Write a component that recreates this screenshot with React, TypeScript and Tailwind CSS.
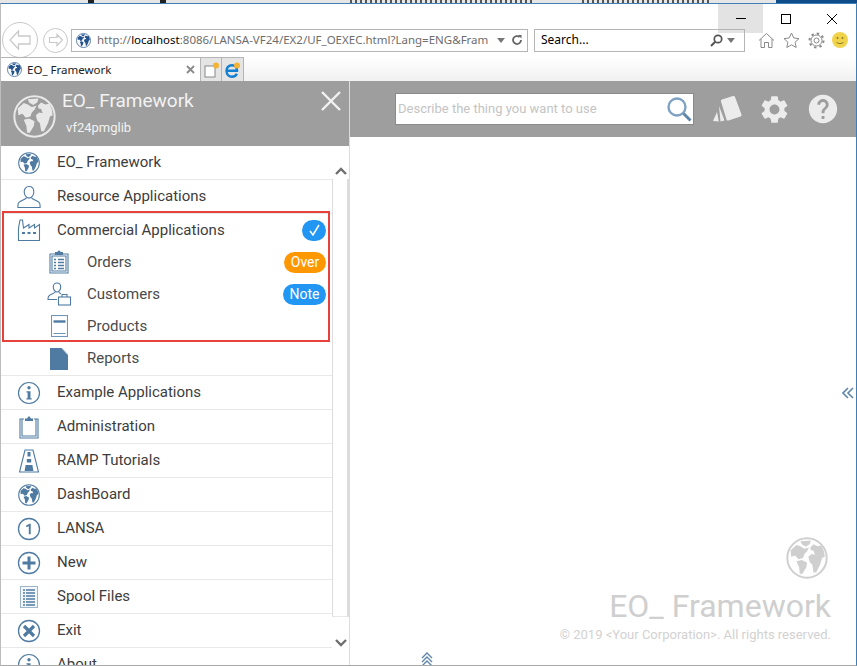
import React from 'react';
import { MdSettings, MdHelp } from 'react-icons/md';

const BLUE = '#4f7ba3';

function Globe({ size, color = BLUE, className = '' }: { size: number; color?: string; className?: string }) {
  return (
    <svg width={size} height={size} viewBox="0 0 32 32" className={className}>
      <circle cx="16" cy="16" r="15" fill="none" stroke={color} strokeWidth="1.500" />
      <path
        fill={color}
        d="M11 3.200 19 2.600 18 5.500 15 7.500 12 5.500zM3.500 10 8 6 11 7 14 9 17.500 8 16 11 14 13 13 16 9.500 17 7 14 4 15zM8 18.500 12 17.500 16 19.500 15.500 23 12.500 28 10.500 28 10 23zM18.500 8 21 5.500 24 7 27 6.500 29 11 29.500 15 27.500 16 26 21 23 27 21 27 20 21 18 19 17 15 19.500 13 22 13.500 21 10.500 19 10z"
      />
    </svg>
  );
}

function Person({ size = 24 }: { size?: number }) {
  return (
    <svg width={size} height={size} viewBox="0 0 24 24" fill="none" stroke={BLUE} strokeWidth="1.100">
      <path d="M12 1.500c3 0 4.800 2.300 4.800 5.200 0 3-1.800 6.400-4.800 6.400S7.200 9.700 7.200 6.700C7.200 3.800 9 1.500 12 1.500z" />
      <path d="M9.500 12.500c0 2-7.500 3.200-8.300 6.200-.3 1.300-.3 3-.3 3.800h22.200c0-.8 0-2.500-.3-3.800-.8-3-8.300-4.200-8.300-6.200" />
    </svg>
  );
}

function Factory() {
  return (
    <svg width="24" height="24" viewBox="0 0 24 24" fill="none" stroke={BLUE} strokeWidth="1.100">
      <path d="M1.500 22.500V10L3 2h2.500l1 8 5.500-3.500V10l5.500-3.500V10l5-3.500v16z" />
      <path d="M5 15h3M10.500 15h3M16 15h3" strokeWidth="2" />
    </svg>
  );
}

function OrderList() {
  return (
    <svg width="20" height="24" viewBox="0 0 20 24" fill="none" stroke={BLUE} strokeWidth="1.100">
      <path d="M1 4h18v19H1zM3 6h14v15H3z" />
      <path d="M6.500 4.500V2.500h2L10 1l1.500 1.500h2v2z" fill={BLUE} />
      <path d="M5 9.500h2M9 9.500h6M5 12.500h2M9 12.500h6M5 15.500h2M9 15.500h6M5 18.500h2M9 18.500h6" strokeWidth="1.500" />
    </svg>
  );
}

function Customer() {
  return (
    <svg width="25" height="24" viewBox="0 0 25 24" fill="none" stroke={BLUE} strokeWidth="1.100">
      <path d="M10 1c2.400 0 3.700 1.800 3.700 4s-1.500 5-3.700 5-3.700-2.800-3.700-5S7.600 1 10 1z" />
      <path d="M8 10c0 1.500-5.500 2-6.500 4.500-.4 1-.5 2.500-.5 3h9M12 10.500c.8.600 1.500 1 2 1.300" />
      <rect x="11.500" y="15" width="12" height="8" />
      <path d="M15 15v-2.500h5V15" />
    </svg>
  );
}

function Product() {
  return (
    <svg width="17" height="22" viewBox="0 0 17 22" fill="none" stroke="#6f94b6" strokeWidth="1.100">
      <rect x=".5" y=".5" width="16" height="21" />
      <path d="M2.500 6.500h12" strokeWidth="2.400" stroke={BLUE} />
      <path d="M2.500 18.500h12" strokeWidth="1" />
    </svg>
  );
}

function Report() {
  return (
    <svg width="18" height="22" viewBox="0 0 18 22">
      <path d="M0 0h11.500L18 7v15H0z" fill={BLUE} />
      <path d="M12.500 .5 17.500 6" stroke="#c9d6e2" strokeWidth="1" />
    </svg>
  );
}

function Info() {
  return (
    <svg width="24" height="24" viewBox="0 0 24 24" fill="none" stroke={BLUE}>
      <circle cx="12" cy="12" r="10.500" strokeWidth="1.200" />
      <circle cx="12" cy="6.800" r="1.700" fill={BLUE} stroke="none" />
      <path d="M9.500 10.200h4v7h1.200v1.300H9.400v-1.300h1.200v-5.700H9.500z" fill={BLUE} stroke="none" />
    </svg>
  );
}

function Clipboard() {
  return (
    <svg width="20" height="24" viewBox="0 0 20 24" fill="none" stroke={BLUE} strokeWidth="1.100">
      <path d="M5 4H1v19h18V4h-4M3 4v17h14V4" />
      <path d="M6 6V3.500h2L10 1l2 2.500h2V6z" fill={BLUE} stroke="none" />
    </svg>
  );
}

function Road() {
  return (
    <svg width="20" height="24" viewBox="0 0 20 24" fill="none" stroke={BLUE} strokeWidth="1.100">
      <path d="M6 1h8l5.500 22H.5z" />
      <path d="M8.500 3h3v4.500h-3zM7.800 10h4.400v3.500H7.800zM6.600 16h6.800l1 6H5.600z" fill={BLUE} stroke="none" />
    </svg>
  );
}

function Numbered() {
  return (
    <svg width="24" height="24" viewBox="0 0 24 24" fill="none" stroke={BLUE}>
      <circle cx="12" cy="12" r="10.500" strokeWidth="1.300" />
      <path d="M9.200 8.600 12.600 6.800h1.100v10.400h-1.900V9.200L9.200 10.200z" fill={BLUE} stroke="none" />
    </svg>
  );
}

function Plus() {
  return (
    <svg width="24" height="24" viewBox="0 0 24 24" fill="none" stroke={BLUE}>
      <circle cx="12" cy="12" r="10.500" strokeWidth="1.300" />
      <path d="M5.500 12h13M12 5.500v13" strokeWidth="3" />
    </svg>
  );
}

function Spool() {
  return (
    <svg width="18" height="22" viewBox="0 0 18 22" fill="none" stroke={BLUE}>
      <rect x=".5" y=".5" width="17" height="21" stroke="#9db6cc" fill="#f4f7fa" />
      <path d="M3 4h2M6 4h9M3 7h2M6 7h9M3 10h2M6 10h9M3 13h2M6 13h9M3 16h2M6 16h9M3 19h2M6 19h9" strokeWidth="1.400" />
    </svg>
  );
}

function Cross() {
  return (
    <svg width="24" height="24" viewBox="0 0 24 24" fill="none" stroke={BLUE}>
      <circle cx="12" cy="12" r="10.500" strokeWidth="1.300" />
      <path d="m7 7 10 10M17 7 7 17" strokeWidth="3.200" />
    </svg>
  );
}

function MenuRow({ icon, label }: { icon: React.ReactNode; label: string }) {
  return (
    <div className="flex h-[34px] shrink-0 items-center border-b border-[#e8e8e8]">
      <div className="flex w-[56px] shrink-0 justify-center">{icon}</div>
      <span className="text-[15px] text-[#3d3d3d]">{label}</span>
    </div>
  );
}

function SubRow({ icon, label, badge }: { icon: React.ReactNode; label: string; badge?: React.ReactNode }) {
  return (
    <div className="flex h-[32px] shrink-0 items-center pr-[6px]">
      <div className="flex w-[86px] shrink-0 justify-center pl-[30px]">{icon}</div>
      <span className="flex-1 text-[15px] text-[#4a4a4a]">{label}</span>
      {badge}
    </div>
  );
}

export default function App() {
  return (
    <div className="relative flex h-[666px] w-[857px] flex-col overflow-hidden bg-white font-['Roboto',sans-serif]">
      {/* window behind */}
      <div className="flex h-[3px] shrink-0 bg-[#e6e6e6]">
        <div className="ml-[88px] w-[6px] bg-[#222]" />
        <div className="ml-[66px] w-[6px] bg-[#222]" />
        <div className="ml-[184px] w-[185px] bg-[repeating-linear-gradient(90deg,#555_0px,#555_2px,#e6e6e6_2px,#e6e6e6_5px)]" />
        <div className="ml-[47px] w-[128px] bg-[repeating-linear-gradient(90deg,#555_0px,#555_2px,#e6e6e6_2px,#e6e6e6_5px)]" />
        <div className="ml-[66px] flex-1 bg-[#0f4c8a]" />
      </div>

      <div className="flex h-[78px] shrink-0 flex-col border-x border-t border-x-[#3f7fb5] border-t-[#3f7fb5] border-l-[#bdbdbd]">
        {/* window buttons */}
        <div className="flex h-[19px] justify-end">
          <div className="flex h-[29px] w-[45px] items-center justify-center bg-[#e3e3e3]">
            <div className="h-[1px] w-[10px] bg-black" />
          </div>
          <div className="flex h-[29px] w-[46px] items-center justify-center">
            <div className="h-[10px] w-[10px] border border-black" />
          </div>
          <div className="flex h-[29px] w-[47px] items-center justify-center pr-[2px]">
            <svg width="12" height="12" viewBox="0 0 12 12" stroke="#000" strokeWidth="1">
              <path d="m1 1 10 10M11 1 1 11" />
            </svg>
          </div>
        </div>

        {/* nav row */}
        <div className="flex h-[34px] items-center pl-[1px]">
          <div className="flex h-[36px] w-[36px] items-center justify-center rounded-full border border-[#c8c8c8] bg-white">
            <svg width="24" height="22" viewBox="0 0 24 22" fill="none" stroke="#c9c9c9" strokeWidth="1.300">
              <path d="M10.500 2 2 11l8.500 9v-5H22V7H10.500z" />
            </svg>
          </div>
          <div className="ml-[5px] flex h-[25px] w-[25px] items-center justify-center rounded-full border border-[#c8c8c8]">
            <svg width="16" height="14" viewBox="0 0 16 14" fill="none" stroke="#c9c9c9" strokeWidth="1.200">
              <path d="M9 1.500 14.500 7 9 12.500V9.500H1.500v-5H9z" />
            </svg>
          </div>
          <div className="ml-[3px] flex h-[23px] w-[457px] items-center border border-[#b5b5b5] pl-[4px] pr-[4px]">
            <Globe size={15} color="#24528c" />
            <span className="ml-[6px] flex-1 whitespace-nowrap font-['Noto_Sans',sans-serif] text-[11.500px] text-[#6d6d6d]">
              http://<span className="text-black">localhost</span>:8086/LANSA-VF24/EX2/UF_OEXEC.html?Lang=ENG&amp;Fram
            </span>
            <svg width="8" height="5" viewBox="0 0 8 5" fill="#777" className="ml-[2px]">
              <path d="M0 0h8L4 5z" />
            </svg>
            <svg width="12" height="12" viewBox="0 0 12 12" fill="none" stroke="#666" strokeWidth="1.800" className="ml-[6px]">
              <path d="M10 6a4 4 0 1 1-1.400-3" />
              <path d="M7 1h3.500v3.500z" fill="#666" stroke="none" />
            </svg>
          </div>
          <div className="ml-[6px] flex h-[23px] w-[211px] items-center border border-[#b5b5b5] pl-[6px] pr-[9px]">
            <span className="flex-1 font-['Noto_Sans',sans-serif] text-[12px] text-black">Search...</span>
            <svg width="13" height="13" viewBox="0 0 13 13" fill="none" stroke="#555" strokeWidth="1.700">
              <circle cx="8" cy="5" r="3.700" />
              <path d="M5.200 7.800 1 12" strokeWidth="2" />
            </svg>
            <svg width="8" height="5" viewBox="0 0 8 5" fill="#777" className="ml-[4px]">
              <path d="M0 0h8L4 5z" />
            </svg>
          </div>
          <div className="ml-[13px] flex items-center gap-[8px]">
            <svg width="17" height="17" viewBox="0 0 17 17" fill="none" stroke="#8a8a8a" strokeWidth="1">
              <path d="M1 8.500 8.500 1.500 16 8.500M3 7v8.500h3.500v-5h4v5H14V7" />
            </svg>
            <svg width="17" height="17" viewBox="0 0 17 17" fill="none" stroke="#8a8a8a" strokeWidth="1">
              <path d="m8.500 1 2.300 5 5.200.6-3.900 3.600 1.100 5.300-4.700-2.700-4.700 2.700 1.100-5.300L1 6.600 6.200 6z" />
            </svg>
            <svg width="17" height="17" viewBox="0 0 17 17" fill="none" stroke="#8a8a8a">
              <circle cx="8.500" cy="8.500" r="2.500" />
              <circle cx="8.500" cy="8.500" r="5.500" />
              <circle cx="8.500" cy="8.500" r="7" strokeDasharray="2.400 3.100" strokeWidth="2" />
            </svg>
            <svg width="16" height="16" viewBox="0 0 16 16" className="-ml-[1px]">
              <circle cx="8" cy="8" r="8" fill="#f1d34b" />
              <circle cx="5.500" cy="6" r="1" fill="#8c7a20" />
              <circle cx="10.500" cy="6" r="1" fill="#8c7a20" />
              <path d="M4.500 10c1 2 6 2 7 0" fill="none" stroke="#8c7a20" />
            </svg>
          </div>
        </div>

        {/* tab row */}
        <div className="flex h-[24px] bg-gradient-to-b from-white to-[#f1f1f1]">
          <div className="flex w-[199px] items-center border-t border-[#b5b5b5] bg-white pl-[6px] pr-[5px]">
            <Globe size={15} color="#24528c" />
            <span className="ml-[5px] flex-1 font-['Noto_Sans',sans-serif] text-[11.500px] text-[#222]">EO_ Framework</span>
            <svg width="9" height="9" viewBox="0 0 9 9" stroke="#8a8a8a" strokeWidth="1.800">
              <path d="m1 1 7 7M8 1 1 8" />
            </svg>
          </div>
          <div className="flex w-[22px] items-center justify-center border border-b-0 border-[#b5b5b5] bg-[#e4e4e4]">
            <svg width="15" height="16" viewBox="0 0 15 16">
              <rect x="1" y="4" width="10" height="11" fill="#fff" stroke="#888" />
              <circle cx="12" cy="3.500" r="3" fill="#f5b335" />
            </svg>
          </div>
          <div className="flex w-[22px] items-center justify-center border border-b-0 border-l-0 border-[#b5b5b5] bg-[#e4e4e4]">
            <svg width="17" height="16" viewBox="0 0 17 16">
              <path d="M2.500 8.800h10.500c0-4-2-5.500-5-5.500-3.500 0-5.500 2.500-5.500 5.500 0 3.500 2.500 6 5.500 6 2.200 0 4-1 4.800-3" fill="none" stroke="#0f7fd4" strokeWidth="2.400" />
              <circle cx="13" cy="3.500" r="3" fill="#f5b335" />
            </svg>
          </div>
        </div>
      </div>

      {/* application */}
      <div className="flex min-h-0 flex-1 border-x border-b border-x-[#3f7fb5] border-b-[#a9a9a9] border-l-[#bdbdbd]">
        {/* left panel */}
        <div className="flex w-[349px] shrink-0 flex-col border-r border-[#dcdcdc]">
          <div className="flex h-[65px] shrink-0 bg-[#9e9e9e] text-white">
            <Globe size={43} color="#e8e8e8" className="ml-[12px] mt-[14px]" />
            <div className="ml-[6px] flex-1">
              <div className="mt-[8px] text-[19px] leading-[24px] text-[#f2f2f2]">EO_ Framework</div>
              <div className="ml-[4px] mt-[7px] text-[13px] leading-[16px] text-[#f2f2f2]">vf24pmglib</div>
            </div>
            <svg width="20" height="20" viewBox="0 0 20 20" stroke="#f2f2f2" strokeWidth="2.400" className="mr-[8px] mt-[10px]">
              <path d="m1 1 18 18M19 1 1 19" />
            </svg>
          </div>

          <div className="relative flex min-h-0 flex-1">
            <div className="min-w-0 flex-1 overflow-hidden">
              <MenuRow icon={<Globe size={22} />} label="EO_ Framework" />
              <MenuRow icon={<Person />} label="Resource Applications" />
              <div className="flex h-[32px] shrink-0 items-center pr-[6px]">
                <div className="flex w-[56px] shrink-0 justify-center"><Factory /></div>
                <span className="flex-1 text-[15px] text-[#3d3d3d]">Commercial Applications</span>
                <div className="flex h-[21px] w-[24px] items-center justify-center rounded-full bg-[#2196f3]">
                  <svg width="11" height="12" viewBox="0 0 11 12" fill="none" stroke="#fff" strokeWidth="1.500">
                    <path d="m1 7 3 4 6-10" />
                  </svg>
                </div>
              </div>
              <SubRow
                icon={<OrderList />}
                label="Orders"
                badge={<span className="flex h-[21px] w-[42px] items-center justify-center rounded-full bg-[#ff9800] text-[14px] text-white">Over</span>}
              />
              <SubRow
                icon={<Customer />}
                label="Customers"
                badge={<span className="flex h-[21px] w-[43px] items-center justify-center rounded-full bg-[#2196f3] text-[14px] text-white">Note</span>}
              />
              <SubRow icon={<Product />} label="Products" />
              <div className="flex h-[34px] shrink-0 items-center border-b border-[#e8e8e8]">
                <div className="flex w-[86px] shrink-0 justify-center pl-[30px]"><Report /></div>
                <span className="text-[15px] text-[#4a4a4a]">Reports</span>
              </div>
              <MenuRow icon={<Info />} label="Example Applications" />
              <MenuRow icon={<Clipboard />} label="Administration" />
              <MenuRow icon={<Road />} label="RAMP Tutorials" />
              <MenuRow icon={<Globe size={22} />} label="DashBoard" />
              <MenuRow icon={<Numbered />} label="LANSA" />
              <MenuRow icon={<Plus />} label="New" />
              <MenuRow icon={<Spool />} label="Spool Files" />
              <MenuRow icon={<Cross />} label="Exit" />
              <MenuRow icon={<Info />} label="About" />
            </div>

            {/* scroll bar */}
            <div className="flex w-[17px] shrink-0 flex-col">
              <div className="flex h-[33px] shrink-0 items-end justify-center pb-[4px]">
                <svg width="12" height="8" viewBox="0 0 12 8" fill="none" stroke="#6f6f6f" strokeWidth="2.400">
                  <path d="m1 7 5-5 5 5" />
                </svg>
              </div>
              <div className="h-[438px] shrink-0 border-x border-b border-r-2 border-l-[#dcdcdc] border-r-[#dcdcdc] border-b-[#e8e8e8]" />
              <div className="flex flex-1 justify-center pt-[22px]">
                <svg width="12" height="8" viewBox="0 0 12 8" fill="none" stroke="#6f6f6f" strokeWidth="2.400">
                  <path d="m1 1 5 5 5-5" />
                </svg>
              </div>
            </div>

            {/* selection outline over the commercial group */}
            <div className="absolute left-[1px] top-[65px] h-[131px] w-[328px] border-2 border-[#e8413c]" />
          </div>
        </div>

        {/* right panel */}
        <div className="relative flex min-w-0 flex-1 flex-col">
          <div className="flex h-[56px] shrink-0 items-center bg-[#9e9e9e] pl-[45px]">
            <div className="flex h-[32px] w-[299px] items-center border border-[#8a8a8a] bg-white pl-[2px] pr-[1px]">
              <span className="flex-1 text-[13px] text-[#c4c4c4]">Describe the thing you want to use</span>
              <svg width="26" height="26" viewBox="0 0 26 26" fill="none" stroke="#7fa1c4" strokeWidth="2.400">
                <circle cx="11" cy="11" r="8.500" />
                <path d="m17.500 17.500 7 7" strokeWidth="3" stroke="#5f87ae" />
              </svg>
            </div>
            <svg width="30" height="28" viewBox="0 0 30 28" fill="#ececec" className="ml-[18px]">
              <path d="M9 6.500Q8.500 5 10 4.500L21 1Q22.500.5 23 2L29.500 19.500Q30 21 28.500 21.500L16.500 25.500Q15 26 14.500 24.500z" />
              <path d="M7 11 12.500 25.500 8.500 26.500zM5 17 6.800 26.500 1 26z" />
            </svg>
            <MdSettings size={33} color="#ececec" className="ml-[16px]" />
            <MdHelp size={34} color="#ececec" className="ml-[15px]" />
          </div>

          <div className="flex min-h-0 flex-1 flex-col items-end pr-[25px] pt-[400px]">
            <Globe size={42} color="#cfcfcf" className="mr-[3px]" />
            <div className="mt-[8px] text-[32px] leading-[38px] text-[#cfcfcf]">EO_ Framework</div>
            <div className="mt-[3px] text-[13px] leading-[14px] text-[#d2d2d2]">© 2019 &lt;Your Corporation&gt;. All rights reserved.</div>
          </div>

          {/* collapse handles */}
          <svg width="12" height="12" viewBox="0 0 12 12" fill="none" stroke="#5f87ae" strokeWidth="1.600" className="absolute right-[2px] top-[306px]">
            <path d="M6 1 1 6l5 5M11 1 6 6l5 5" />
          </svg>
          <svg width="12" height="13" viewBox="0 0 12 13" fill="none" stroke="#5f87ae" strokeWidth="1.400" className="absolute bottom-[0px] left-[71px]">
            <path d="M1 6l5-5 5 5M1 10l5-5 5 5M1 14l5-5 5 5" />
          </svg>
        </div>
      </div>
    </div>
  );
}
